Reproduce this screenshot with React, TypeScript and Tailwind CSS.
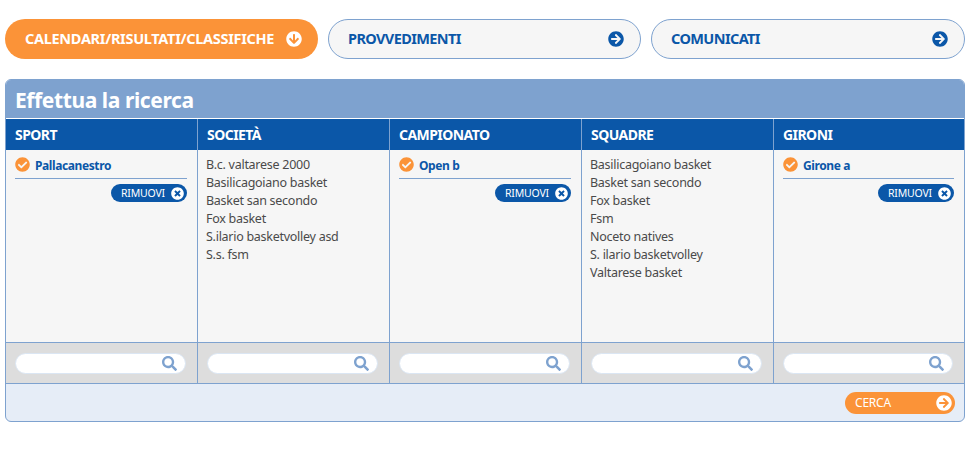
import { FaArrowCircleDown, FaArrowCircleRight, FaCheckCircle, FaTimesCircle, FaSearch } from "react-icons/fa";

const font = { fontFamily: '"Noto Sans", sans-serif' };

const columns = [
  { title: "SPORT", selected: "Pallacanestro", items: [] as string[] },
  {
    title: "SOCIETÀ",
    items: ["B.c. valtarese 2000", "Basilicagoiano basket", "Basket san secondo", "Fox basket", "S.ilario basketvolley asd", "S.s. fsm"],
  },
  { title: "CAMPIONATO", selected: "Open b", items: [] as string[] },
  {
    title: "SQUADRE",
    items: ["Basilicagoiano basket", "Basket san secondo", "Fox basket", "Fsm", "Noceto natives", "S. ilario basketvolley", "Valtarese basket"],
  },
  { title: "GIRONI", selected: "Girone a", items: [] as string[] },
];

function Tab({ label, active }: { label: string; active?: boolean }) {
  if (active) {
    return (
      <button className="flex h-10 items-center justify-between rounded-full bg-[#fb9338] pl-5 pr-[16px] text-white">
        <span className="text-[14.5px] font-bold tracking-[-0.3px]">{label}</span>
        <FaArrowCircleDown className="h-4 w-4" />
      </button>
    );
  }
  return (
    <button className="flex h-10 items-center justify-between rounded-full border border-[#7ea2cf] bg-[#f6f6f6] pl-[19px] pr-[16px] text-[#0b57a8]">
      <span className="text-[14.5px] font-bold tracking-[-0.6px]">{label}</span>
      <FaArrowCircleRight className="h-4 w-4" />
    </button>
  );
}

export default function App() {
  return (
    <div className="min-h-[455px] bg-white pl-[5px] pt-[19px]" style={font}>
      <div className="grid w-[960px] grid-cols-[313px_313px_1fr] gap-[10px]">
        <Tab label="CALENDARI/RISULTATI/CLASSIFICHE" active />
        <Tab label="PROVVEDIMENTI" />
        <Tab label="COMUNICATI" />
      </div>

      <div className="mt-5 w-[960px] overflow-hidden rounded-md border border-[#7ea2cf] bg-[#e6edf7]">
        <div className="h-[38px] bg-[#7ea2cf] pl-[9px] text-[21px] font-bold leading-[41px] tracking-[-0.4px] text-white">
          Effettua la ricerca
        </div>
        <div className="grid grid-cols-[192px_192px_192px_192px_1fr] border-t border-white">
          {columns.map((col, i) => (
            <div key={col.title} className={i < 4 ? "flex flex-col border-r border-[#7ea2cf]" : "flex flex-col"}>
              <div className="h-[31px] bg-[#0b57a8] pl-[9px] text-[14px] font-bold leading-[31px] tracking-[-0.55px] text-white">
                {col.title}
              </div>
              <div className="h-[192px] bg-[#f6f6f6] pl-[9px] pr-[10px] pt-[6px] text-[12.5px] leading-[18px] text-[#4a4a4a]">
                {col.selected ? (
                  <>
                    <div className="flex h-[23px] items-start gap-[5px] border-b border-[#7ea2cf] text-[12px] font-bold tracking-[-0.4px] text-[#0b57a8]">
                      <FaCheckCircle className="mt-px h-[15px] w-[15px] text-[#fb9338]" />
                      <span className="leading-[19px]">{col.selected}</span>
                    </div>
                    <div className="mt-[5px] flex justify-end">
                      <span className="flex h-[18px] w-[76px] items-center justify-between rounded-full bg-[#0b57a8] pl-[10px] pr-[3px] text-[10.5px] tracking-[-0.2px] text-white">
                        RIMUOVI
                        <FaTimesCircle className="h-[13px] w-[13px]" />
                      </span>
                    </div>
                  </>
                ) : (
                  <ul>
                    {col.items.map((item) => (
                      <li key={item} className="-ml-px tracking-[-0.27px]">{item}</li>
                    ))}
                  </ul>
                )}
              </div>
              <div className="flex h-[42px] items-center border-y border-[#7ea2cf] bg-[#dddddd] pl-[9px] pr-[11px]">
                <div className="flex h-[21px] w-full items-center justify-end rounded-full border border-[#dbe6f3] bg-white pr-[8px]">
                  <FaSearch className="h-[15px] w-[15px] text-[#7ea2cf]" />
                </div>
              </div>
            </div>
          ))}
        </div>
        <div className="flex h-[37px] items-start justify-end pr-[9px] pt-[8px]">
          <button className="flex h-[22px] w-[110px] items-center justify-between rounded-full bg-[#fb9338] pl-[10px] pr-[3px] text-[12px] tracking-[-0.2px] text-white">
            CERCA
            <FaArrowCircleRight className="h-4 w-4" />
          </button>
        </div>
      </div>
    </div>
  );
}
